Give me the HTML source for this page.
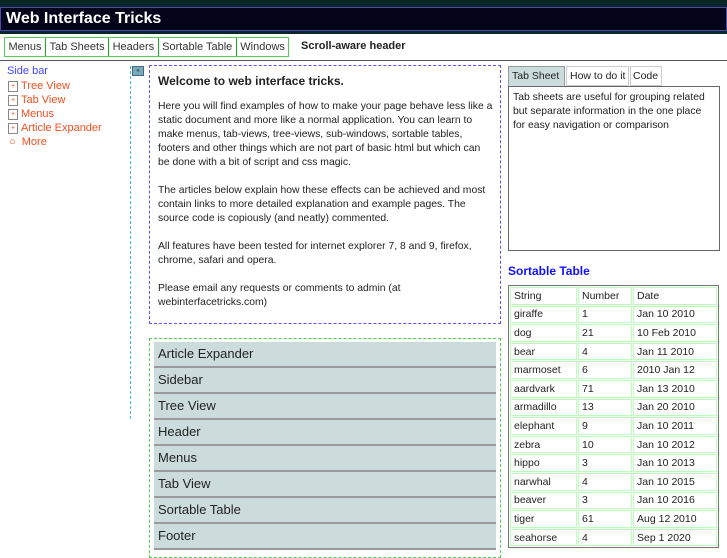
<!DOCTYPE html>
<html><head><meta charset="utf-8"><style>
*{margin:0;padding:0;box-sizing:border-box}
body{width:727px;height:545px;overflow:hidden;background:#fff;font-family:"Liberation Sans",sans-serif;font-size:10.5px;color:#222;position:relative}
.a{position:absolute}
#top{left:0;top:0;width:727px;height:34px;background:#0b2626}
#title{left:0;top:7px;width:727px;height:24px;background:#04041a;border:1px solid #4a4ab0;color:#fff;font-weight:bold;font-size:16px;line-height:22px;padding-left:5px}
#nav{left:4px;top:37px;height:20px;border:1px solid #5c5;display:flex}
#nav div{border-right:1px solid #2a2;padding:0 3.5px;line-height:18px;font-size:11px;color:#333}
#nav div:last-child{border-right:none}
#hr{left:0;top:60px;width:727px;height:1px;background:#555}
.sb{color:#f05020;font-size:11px;line-height:14px;left:21px}
.box{width:10px;height:11px;border:1px solid #888;left:8px;font-size:7px;line-height:9px;text-align:center;color:#f05020}
#main{left:149px;top:65px;width:352px;height:259px;border:1px dashed #55f;padding:8px 7px 8px 8px;font-size:10.4px;line-height:14px}
#main p{margin-bottom:14px}
#arts{left:149px;top:338px;width:352px;height:220px;border:1px dashed #5c5;padding:3px 4px}
.it{height:26px;background:#ccdcdc;border-bottom:2px solid #999;font-size:13px;line-height:24px;padding-left:4px;color:#222}
td{border:1px solid #bfb;padding:0 3px;height:17.6px;font-size:10.5px}
</style></head><body>
<div class="a" id="top"></div>
<div class="a" id="title">Web Interface Tricks</div>
<div class="a" id="nav"><div>Menus</div><div>Tab Sheets</div><div>Headers</div><div>Sortable Table</div><div>Windows</div></div>
<div class="a" style="left:301px;top:40px;font-weight:bold;font-size:11px">Scroll-aware header</div>
<div class="a" id="hr"></div>
<div class="a" style="left:7px;top:65px;color:#44f;font-size:11px">Side bar</div>
<div class="a box" style="top:81px">+</div><div class="a sb" style="top:79px">Tree View</div>
<div class="a box" style="top:95px">+</div><div class="a sb" style="top:93px">Tab View</div>
<div class="a box" style="top:109px">+</div><div class="a sb" style="top:107px">Menus</div>
<div class="a box" style="top:123px">+</div><div class="a sb" style="top:121px">Article Expander</div>
<div class="a sb" style="left:9px;top:135px">○&nbsp; More</div>
<div class="a" style="left:130px;top:66px;height:353px;border-left:1px dashed #4bc"></div>
<div class="a" style="left:132px;top:66px;width:12px;height:10px;background:#7ab;border:1px solid #468;font-size:6px;line-height:8px;text-align:center">«</div>
<div class="a" id="main"><p style="font-weight:bold;font-size:12px;margin-bottom:12px">Welcome to web interface tricks.</p>
<p>Here you will find examples of how to make your page behave less like a static document and more like a normal application. You can learn to make menus, tab-views, tree-views, sub-windows, sortable tables, footers and other things which are not part of basic html but which can be done with a bit of script and css magic.</p>
<p>The articles below explain how these effects can be achieved and most contain links to more detailed explanation and example pages. The source code is copiously (and neatly) commented.</p>
<p>All features have been tested for internet explorer 7, 8 and 9, firefox, chrome, safari and opera.</p>
<p>Please email any requests or comments to admin (at webinterfacetricks.com)</p></div>
<div class="a" id="arts"><div class="it">Article Expander</div><div class="it">Sidebar</div><div class="it">Tree View</div><div class="it">Header</div><div class="it">Menus</div><div class="it">Tab View</div><div class="it">Sortable Table</div><div class="it">Footer</div></div>
<div class="a" style="left:508px;top:66px;width:57px;height:21px;background:#ccdcdc;border:1px solid #999;line-height:19px;padding-left:3px">Tab Sheet</div>
<div class="a" style="left:566px;top:66px;width:63px;height:20px;border:1px solid #ccc;line-height:19px;padding-left:3px">How to do it</div>
<div class="a" style="left:630px;top:66px;width:32px;height:20px;border:1px solid #ccc;line-height:19px;padding-left:2px">Code</div>
<div class="a" style="left:508px;top:86px;width:212px;height:165px;border:1px solid #666;padding:4px 4px;line-height:14px;font-size:10.4px">Tab sheets are useful for grouping related but separate information in the one place for easy navigation or comparison</div>
<div class="a" style="left:508px;top:264px;color:#11f;font-weight:bold;font-size:12px">Sortable Table</div>
<table class="a" style="left:508px;top:285px;width:211px;border:1px solid #777;border-collapse:separate;border-spacing:1px">
<tr><td style="width:67px">String</td><td style="width:54px">Number</td><td>Date</td></tr>
<tr><td>giraffe</td><td>1</td><td>Jan 10 2010</td></tr>
<tr><td>dog</td><td>21</td><td>10 Feb 2010</td></tr>
<tr><td>bear</td><td>4</td><td>Jan 11 2010</td></tr>
<tr><td>marmoset</td><td>6</td><td>2010 Jan 12</td></tr>
<tr><td>aardvark</td><td>71</td><td>Jan 13 2010</td></tr>
<tr><td>armadillo</td><td>13</td><td>Jan 20 2010</td></tr>
<tr><td>elephant</td><td>9</td><td>Jan 10 2011</td></tr>
<tr><td>zebra</td><td>10</td><td>Jan 10 2012</td></tr>
<tr><td>hippo</td><td>3</td><td>Jan 10 2013</td></tr>
<tr><td>narwhal</td><td>4</td><td>Jan 10 2015</td></tr>
<tr><td>beaver</td><td>3</td><td>Jan 10 2016</td></tr>
<tr><td>tiger</td><td>61</td><td>Aug 12 2010</td></tr>
<tr><td>seahorse</td><td>4</td><td>Sep 1 2020</td></tr>
</table>
</body></html>
